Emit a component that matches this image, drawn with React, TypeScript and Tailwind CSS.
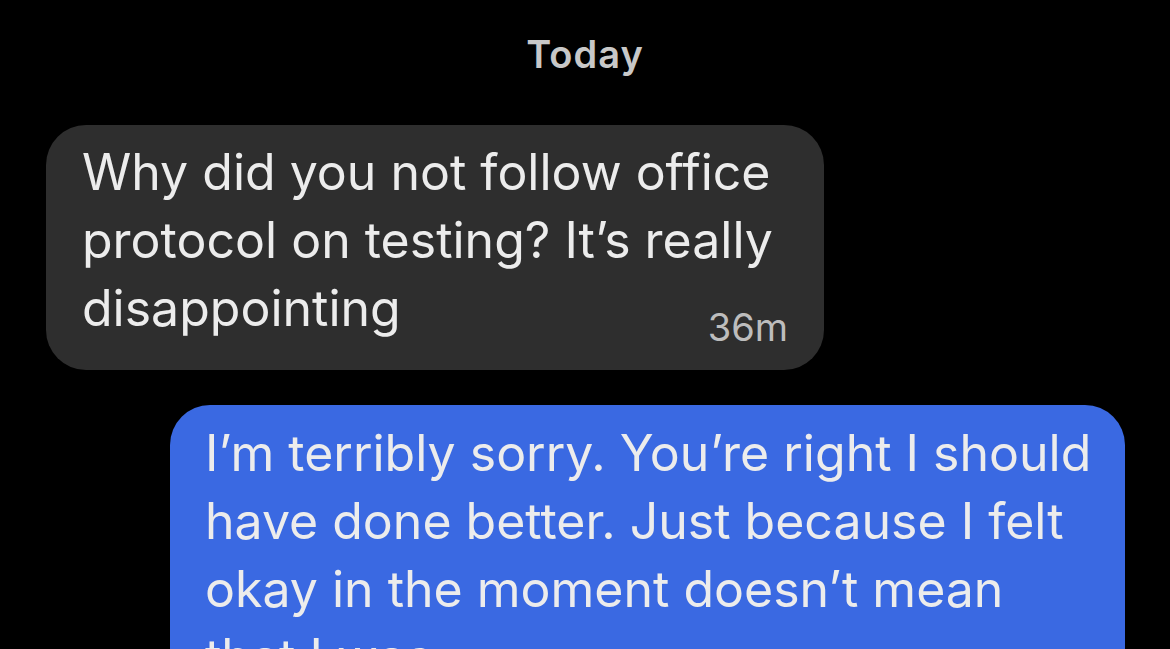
export default function App() {
  return (
    <div className="flex min-h-screen flex-col bg-black font-['Inter','Noto_Sans',sans-serif] text-[#ececec]">
      {/* day label */}
      <div className="pt-[31px] text-center text-[38px] font-semibold leading-[46px] tracking-[1px] text-[#c8c8c8]">
        Today
      </div>

      {/* incoming message */}
      <div className="ml-[46px] mt-[48px] w-[778px] rounded-[40px] bg-[#2e2e2e] pb-[28px] pl-[36px] pr-[36px] pt-[13px] text-[50px] leading-[68px]">
        <div>Why did you not follow office</div>
        <div>protocol on testing? It’s really</div>
        <div className="flex items-end justify-between">
          <span>disappointing</span>
          <span className="mb-[-4px] text-[38px] leading-none text-[#bdbdbd]">36m</span>
        </div>
      </div>

      {/* outgoing message */}
      <div className="ml-[170px] mt-[35px] w-[955px] rounded-t-[40px] bg-[#3a69e2] pl-[35px] pr-[20px] pt-[14px] text-[50px] leading-[68px]">
        <div>I’m terribly sorry. You’re right I should</div>
        <div>have done better. Just because I felt</div>
        <div>okay in the moment doesn’t mean</div>
        <div>that I was.</div>
      </div>
    </div>
  );
}
